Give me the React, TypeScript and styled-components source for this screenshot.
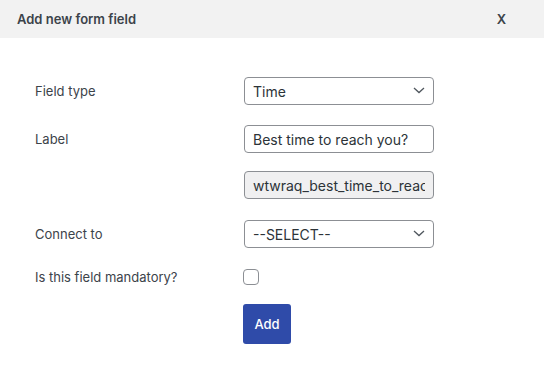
import React from 'react';
import styled, { createGlobalStyle } from 'styled-components';

const Global = createGlobalStyle`
  html, body { margin: 0; padding: 0; background: #fff; }
  body { font-family: Inter, "Noto Sans", sans-serif; color: #3c434a; }
  * { box-sizing: border-box; }
`

const Modal = styled.div`
  width: 544px;
  height: 368px;
  background: #fff;
`

const Header = styled.div`
  height: 38px;
  background: #f2f2f2;
  display: flex;
  align-items: center;
  justify-content: space-between;
  padding: 0 38px 0 17px;
`

const Title = styled.h2`
  margin: 0;
  font-size: 13px;
  font-weight: 600;
  color: #3c434a;
`

const Close = styled.button`
  border: none;
  background: none;
  padding: 0;
  font-family: inherit;
  font-size: 13px;
  font-weight: 600;
  color: #3c434a;
  cursor: pointer;
`

const Body = styled.div`
  padding: 39px 0 0 35px;
`

const Row = styled.div<{ gap: number }>`
  display: flex;
  align-items: center;
  margin-bottom: ${p => p.gap}px;
`

const Label = styled.label`
  width: 209px;
  font-size: 13px;
  color: #3c434a;
`

const SelectWrap = styled.div`
  position: relative;
  width: 190px;
  height: 28px;
`

const Select = styled.select`
  appearance: none;
  width: 100%;
  height: 100%;
  border: 1px solid #8c8f94;
  border-radius: 4px;
  background: #fff;
  padding: 0 24px 0 8px;
  font-family: inherit;
  font-size: 14px;
  color: #2c3338;
`

const Chevron = styled.svg`
  position: absolute;
  right: 9px;
  top: 10px;
  pointer-events: none;
`

const Input = styled.input<{ readOnlyStyle?: boolean }>`
  width: 190px;
  height: 28px;
  border: 1px solid #8c8f94;
  border-radius: 4px;
  background: ${p => (p.readOnlyStyle ? '#f0f0f1' : '#fff')};
  padding: 0 8px;
  font-family: inherit;
  font-size: 14px;
  color: #2c3338;
  outline: none;
`

const Check = styled.input`
  appearance: none;
  width: 16px;
  height: 16px;
  margin: 0 0 0 -1px;
  border: 1px solid #8c8f94;
  border-radius: 4px;
  background: #fff;
`

const AddButton = styled.button`
  width: 48px;
  height: 40px;
  margin-left: -1px;
  border: none;
  border-radius: 3px;
  background: #2f4ba9;
  color: #fff;
  font-family: inherit;
  font-size: 13px;
  font-weight: 500;
  cursor: pointer;
`

function DropDown({ value }: { value: string }) {
  return (
    <SelectWrap>
      <Select defaultValue={value}>
        <option>{value}</option>
      </Select>
      <Chevron width="12" height="7" viewBox="0 0 12 7">
        <path d="M1 1 L6 5.6 L11 1" fill="none" stroke="#50575e" strokeWidth="1.3" />
      </Chevron>
    </SelectWrap>
  );
}

export default function App() {
  return (
    <Modal>
      <Global />
      <Header>
        <Title>Add new form field</Title>
        <Close>X</Close>
      </Header>
      <Body>
        <Row gap={20}>
          <Label>Field type</Label>
          <DropDown value="Time" />
        </Row>
        <Row gap={18}>
          <Label>Label</Label>
          <Input defaultValue="Best time to reach you?" />
        </Row>
        <Row gap={21}>
          <Label />
          <Input readOnlyStyle readOnly defaultValue="wtwraq_best_time_to_reach_you" />
        </Row>
        <Row gap={21}>
          <Label>Connect to</Label>
          <DropDown value="--SELECT--" />
        </Row>
        <Row gap={19}>
          <Label>Is this field mandatory?</Label>
          <Check type="checkbox" />
        </Row>
        <Row gap={0}>
          <Label />
          <AddButton>Add</AddButton>
        </Row>
      </Body>
    </Modal>
  );
}
